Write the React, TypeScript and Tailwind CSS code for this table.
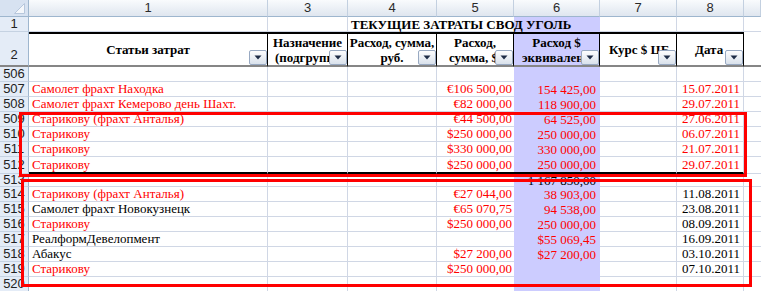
const widths = [
  "w-[239px]",
  "w-[80px]",
  "w-[89px]",
  "w-[77px]",
  "w-[86px]",
  "w-[77px]",
  "w-[67px]",
  "w-[17px]",
];
const colLabels = ["1", "3", "4", "5", "6", "7", "8", ""];

type Cell = [string, "r" | "k"] | null;
type Row = { n: number; a?: Cell; e?: Cell; f?: Cell; h?: Cell };

const rows: Row[] = [
  { n: 506 },
  { n: 507, a: ["Самолет фрахт Находка", "r"], e: ["€106 500,00", "r"], f: ["154 425,00", "r"], h: ["15.07.2011", "r"] },
  { n: 508, a: ["Самолет фрахт Кемерово день Шахт.", "r"], e: ["€82 000,00", "r"], f: ["118 900,00", "r"], h: ["29.07.2011", "r"] },
  { n: 509, a: ["Старикову (фрахт Анталья)", "r"], e: ["€44 500,00", "r"], f: ["64 525,00", "r"], h: ["27.06.2011", "r"] },
  { n: 510, a: ["Старикову", "r"], e: ["$250 000,00", "r"], f: ["250 000,00", "r"], h: ["06.07.2011", "r"] },
  { n: 511, a: ["Старикову", "r"], e: ["$330 000,00", "r"], f: ["330 000,00", "r"], h: ["21.07.2011", "r"] },
  { n: 512, a: ["Старикову", "r"], e: ["$250 000,00", "r"], f: ["250 000,00", "r"], h: ["29.07.2011", "r"] },
  { n: 513, f: ["1 167 850,00", "k"] },
  { n: 514, a: ["Старикову (фрахт Анталья)", "r"], e: ["€27 044,00", "r"], f: ["38 903,00", "r"], h: ["11.08.2011", "k"] },
  { n: 515, a: ["Самолет фрахт Новокузнецк", "k"], e: ["€65 070,75", "r"], f: ["94 538,00", "r"], h: ["23.08.2011", "k"] },
  { n: 516, a: ["Старикову", "r"], e: ["$250 000,00", "r"], f: ["250 000,00", "r"], h: ["08.09.2011", "k"] },
  { n: 517, a: ["РеалформДевелопмент", "k"], f: ["$55 069,45", "r"], h: ["16.09.2011", "k"] },
  { n: 518, a: ["Абакус", "k"], e: ["$27 200,00", "r"], f: ["$27 200,00", "r"], h: ["03.10.2011", "k"] },
  { n: 519, a: ["Старикову", "r"], e: ["$250 000,00", "r"], h: ["07.10.2011", "k"] },
  { n: 520 },
];

const tone = (c?: Cell) => (c && c[1] === "r" ? "text-[#ff0000]" : "text-black");

function FilterButton() {
  return (
    <div className="absolute right-0 bottom-0 w-[18px] h-[15px] rounded-[2px] border border-[#98a9c2] bg-linear-to-b from-[#fdfdfe] to-[#d9e1eb] flex items-center justify-center">
      <svg width="8" height="5" viewBox="0 0 8 5">
        <polygon points="0.5,0.5 7.5,0.5 4,4.5" fill="#1e2c47" />
      </svg>
    </div>
  );
}

function HeadCell({ w, children, lav }: { w: string; children: React.ReactNode; lav?: boolean }) {
  return (
    <div
      className={`${w} relative h-full overflow-hidden border-t-2 border-t-black border-r border-r-black border-b-2 border-b-[#868686] ${
        lav ? "bg-[#ccccff]" : "bg-white"
      } flex flex-col justify-center font-bold text-[13px] leading-[15px]`}
    >
      {children}
      <FilterButton />
    </div>
  );
}

export default function App() {
  return (
    <div
      className="relative w-[761px] h-[291px] overflow-hidden bg-white"
      style={{ fontFamily: '"Liberation Serif", "Times New Roman", serif' }}
    >
      {/* column letters */}
      <div className="flex h-[17px] font-['Liberation_Sans',sans-serif] text-[13px] text-[#2a2a2a]">
        <div className="w-[29px] h-full bg-[#d7e2f1] border-r border-b border-[#9eb6ce] flex items-end justify-end pr-[3px] pb-[2px]">
          <svg width="11" height="11" viewBox="0 0 11 11">
            <polygon points="10.5,0.5 10.5,10.5 0.5,10.5" fill="#f4f7fb" stroke="#b7c7dc" />
          </svg>
        </div>
        {colLabels.map((l, i) => (
          <div
            key={i}
            className={`${widths[i]} h-full border-r border-r-[#c3d0e0] border-b border-b-[#9eb6ce] bg-linear-to-b from-[#f9fbfd] to-[#dfe6ef] flex items-center justify-center`}
          >
            {l}
          </div>
        ))}
      </div>

      {/* row 1: title */}
      <div className="flex h-[15px] text-[13px]">
        <div className="w-[29px] h-full bg-[#e4ecf7] border-r border-r-[#9eb6ce] border-b border-b-[#c5d2e2] flex items-center justify-center font-['Liberation_Sans',sans-serif] text-[#222]">
          1
        </div>
        <div className={`${widths[0]} h-full border-r border-b border-[#d0d7e5]`} />
        <div className={`${widths[1]} h-full border-r border-b border-[#d0d7e5]`} />
        <div className={`${widths[2]} h-full border-b border-[#d0d7e5] relative`}>
          <span className="absolute left-[3px] top-0 z-10 whitespace-nowrap font-bold leading-[15px]">
            ТЕКУЩИЕ ЗАТРАТЫ СВОД УГОЛЬ
          </span>
        </div>
        <div className={`${widths[3]} h-full border-b border-[#d0d7e5]`} />
        <div className={`${widths[4]} h-full bg-[#ccccff]`} />
        <div className={`${widths[5]} h-full border-r border-b border-[#d0d7e5]`} />
        <div className={`${widths[6]} h-full border-r border-b border-[#d0d7e5]`} />
        <div className={`${widths[7]} h-full border-b border-[#d0d7e5]`} />
      </div>

      {/* row 2: table header */}
      <div className="flex h-[35px]">
        <div className="w-[29px] h-full bg-[#e4ecf7] border-r border-r-[#9eb6ce] border-b-2 border-b-[#868686] flex items-end justify-center pb-[1px] font-['Liberation_Sans',sans-serif] text-[13px] text-[#222]">
          2
        </div>
        <HeadCell w={widths[0]}>
          <div className="text-center">Статьи затрат</div>
        </HeadCell>
        <HeadCell w={widths[1]}>
          <div className="text-center whitespace-nowrap">Назначение</div>
          <div className="whitespace-nowrap pl-[7px]">(подгруппа)</div>
        </HeadCell>
        <HeadCell w={widths[2]}>
          <div className="text-center whitespace-nowrap">Расход, сумма,</div>
          <div className="text-center">руб.</div>
        </HeadCell>
        <HeadCell w={widths[3]}>
          <div className="text-center">Расход,</div>
          <div className="whitespace-nowrap pl-[12px]">сумма, $</div>
        </HeadCell>
        <HeadCell w={widths[4]} lav>
          <div className="text-center">Расход $</div>
          <div className="whitespace-nowrap pl-[8px]">эквивалент</div>
        </HeadCell>
        <HeadCell w={widths[5]}>
          <div className="whitespace-nowrap pl-[9px]">Курс $ ЦБ</div>
        </HeadCell>
        <HeadCell w={widths[6]}>
          <div className="whitespace-nowrap pl-[18px]">Дата</div>
        </HeadCell>
        <div className={`${widths[7]} h-full border-b-2 border-b-[#868686]`} />
      </div>

      {/* data rows */}
      {rows.map((r) => {
        const thick = r.n === 512;
        const h = thick ? "h-[17px]" : r.n === 513 ? "h-[13px]" : "h-[15px]";
        const b = thick ? "border-b-2 border-b-black" : "border-b border-b-[#d0d7e5]";
        return (
          <div key={r.n} className={`flex ${h} text-[13px] leading-[14px]`}>
            <div className="w-[29px] h-full bg-[#e4ecf7] border-r border-r-[#9eb6ce] border-b border-b-[#c5d2e2] flex items-center justify-center font-['Liberation_Sans',sans-serif] text-[#222]">
              {r.n}
            </div>
            <div className={`${widths[0]} h-full border-r border-r-[#d0d7e5] ${b} flex items-center pl-[3px] whitespace-nowrap ${tone(r.a)}`}>
              {r.a?.[0]}
            </div>
            <div className={`${widths[1]} h-full border-r border-r-[#d0d7e5] ${b}`} />
            <div className={`${widths[2]} h-full border-r border-r-[#d0d7e5] ${b}`} />
            <div className={`${widths[3]} h-full ${b} flex items-center justify-end pr-[2px] whitespace-nowrap ${tone(r.e)}`}>
              {r.e?.[0]}
            </div>
            <div className={`${widths[4]} h-full bg-[#ccccff] ${thick ? "border-b-2 border-b-black" : ""} flex items-center justify-end pr-[4px] whitespace-nowrap ${tone(r.f)}`}>
              {r.f?.[0]}
            </div>
            <div className={`${widths[5]} h-full border-r border-r-[#d0d7e5] ${b}`} />
            <div className={`${widths[6]} h-full border-r border-r-[#d0d7e5] ${b} flex items-center justify-end pr-[3px] whitespace-nowrap ${tone(r.h)}`}>
              {r.h?.[0]}
            </div>
            <div className={`${widths[7]} h-full border-b border-b-[#d0d7e5]`} />
          </div>
        );
      })}

      {/* red highlight frames drawn over the sheet */}
      <div className="absolute left-[19px] top-[112px] w-[728px] h-[65px] border-[3px] border-[#ff0000] pointer-events-none" />
      <div className="absolute left-[21px] top-[179px] w-[731px] h-[108px] border-[3px] border-[#ff0000] pointer-events-none" />
    </div>
  );
}
